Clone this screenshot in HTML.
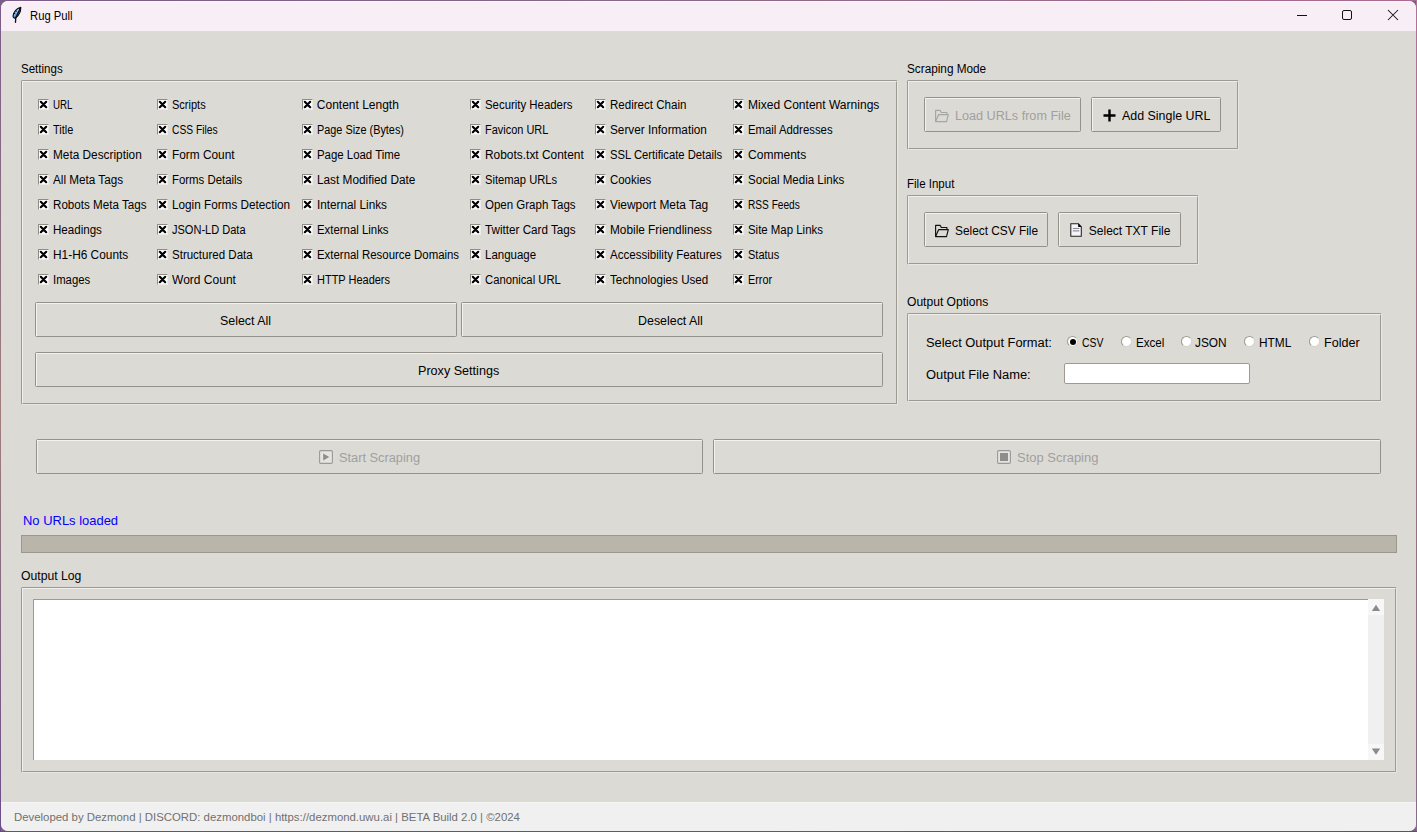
<!DOCTYPE html>
<html><head><meta charset="utf-8">
<style>
*{margin:0;padding:0;box-sizing:border-box}
html,body{width:1417px;height:832px;overflow:hidden}
body{font-family:"Liberation Sans",sans-serif;font-size:12px;color:#000;position:relative;background:#7a5f86}
.a{position:absolute}
.t{position:absolute;white-space:nowrap;line-height:16px;transform-origin:0 0}
#win{position:absolute;left:1px;top:1px;width:1415px;height:830px;background:#dcdad5;border-radius:7px;overflow:hidden}
.cb{position:absolute;width:11px;height:11px;background:#fff;border-top:1px solid #8f8c85;border-left:1px solid #8f8c85;border-right:1px solid #ecebe8;border-bottom:1px solid #ecebe8}
.cb svg{position:absolute;left:0px;top:0px}
.grv{position:absolute;border-top:1px solid #9e9a91;border-left:1px solid #9e9a91;border-right:1px solid #e9e7e3;border-bottom:1px solid #e9e7e3;border-radius:2px}
.grv>div{position:absolute;left:0;top:0;right:0;bottom:0;border-top:1px solid #f1efec;border-left:1px solid #f1efec;border-right:1px solid #9e9a91;border-bottom:1px solid #9e9a91;border-radius:1px}
.btn{position:absolute;border:1px solid #94918a;border-radius:1.5px;background:#dcdad5;box-shadow:inset 1px 1px 0 #f3f2ef}
.radio{position:absolute;width:11px;height:11px;border-radius:50%;background:#fff;border:1px solid;border-color:#9e9a91 #d6d3ce #d6d3ce #9e9a91}
</style></head><body>
<div class="a" style="left:0;top:0;width:1417px;height:1px;background:linear-gradient(90deg,#7a5a88,#8a6a86 50%,#a86a90)"></div>
<div class="a" style="left:0;top:0;width:1px;height:832px;background:linear-gradient(180deg,#7a5a8a,#a07e7c 50%,#6a4c8a)"></div>
<div class="a" style="left:1416px;top:0;width:1px;height:832px;background:linear-gradient(180deg,#b0709a,#a07080 50%,#8a6a8a)"></div>
<div class="a" style="left:0;top:831px;width:1417px;height:1px;background:linear-gradient(90deg,#6a4c8a,#6a5080 50%,#5a4a9a)"></div>
<div id="win"></div>
<div class="a" style="left:1px;top:1px;width:1415px;height:30px;background:#f7eef6;border-radius:7px 7px 0 0;border-top:1px solid #fdf7fd"></div>
<div class="a" style="left:1px;top:802px;width:1415px;height:29px;background:#f0f0f0;border-radius:0 0 7px 7px;border-top:1px solid #f5f5f3"></div>
<svg class="a" style="left:0;top:0" width="30" height="30" viewBox="0 0 30 30"><path d="M20.8 7.2C17.2 8.2 13.8 11.6 13.1 15.8c-.2 1.6.9 2.6 2.4 2.2C18.6 15.6 20.9 11.4 20.8 7.2z" fill="#4f8fe0" stroke="#0d0d0d" stroke-width="1.1" stroke-linejoin="round"/><path d="M14.6 15.6C15.6 12.6 17.4 10.2 19.2 9" fill="none" stroke="#b8dcff" stroke-width="1.1"/><path d="M20.2 8.2L16 17.4M15.8 17.2L15.5 22.3" stroke="#0d0d0d" stroke-width="1.3" stroke-linecap="round"/><path d="M14.2 13.4l1.4.6M15.6 10.8l1.3.6" stroke="#0d0d0d" stroke-width="1"/></svg>
<div class="t" style="left:30.3px;top:8px;transform:scaleX(0.9378)">Rug Pull</div>
<div class="a" style="left:1297px;top:15px;width:10px;height:1px;background:#111"></div>
<div class="a" style="left:1342px;top:10px;width:10px;height:10px;border:1px solid #111;border-radius:2px"></div>
<svg class="a" style="left:1387px;top:9px" width="12" height="12" viewBox="0 0 12 12"><path d="M1 1L11 11M11 1L1 11" stroke="#111" stroke-width="1.05"/></svg>

<div class="t" style="left:20.8px;top:61px;transform:scaleX(0.9605)">Settings</div>
<div class="grv" style="left:21px;top:80px;width:877px;height:325px"><div></div></div>
<div class="cb" style="left:38px;top:99px"><svg width="9" height="9" viewBox="0 0 9 9"><path d="M1.8 1.8L7.2 7.2M7.2 1.8L1.8 7.2" stroke="#000" stroke-width="2.2" stroke-linecap="round"/></svg></div><div class="t" style="left:52.8px;top:97px;transform:scaleX(0.8125)">URL</div>
<div class="cb" style="left:38px;top:124px"><svg width="9" height="9" viewBox="0 0 9 9"><path d="M1.8 1.8L7.2 7.2M7.2 1.8L1.8 7.2" stroke="#000" stroke-width="2.2" stroke-linecap="round"/></svg></div><div class="t" style="left:52.8px;top:122px;transform:scaleX(0.9130)">Title</div>
<div class="cb" style="left:38px;top:149px"><svg width="9" height="9" viewBox="0 0 9 9"><path d="M1.8 1.8L7.2 7.2M7.2 1.8L1.8 7.2" stroke="#000" stroke-width="2.2" stroke-linecap="round"/></svg></div><div class="t" style="left:52.8px;top:147px;transform:scaleX(0.9856)">Meta Description</div>
<div class="cb" style="left:38px;top:174px"><svg width="9" height="9" viewBox="0 0 9 9"><path d="M1.8 1.8L7.2 7.2M7.2 1.8L1.8 7.2" stroke="#000" stroke-width="2.2" stroke-linecap="round"/></svg></div><div class="t" style="left:52.8px;top:172px;transform:scaleX(0.9764)">All Meta Tags</div>
<div class="cb" style="left:38px;top:199px"><svg width="9" height="9" viewBox="0 0 9 9"><path d="M1.8 1.8L7.2 7.2M7.2 1.8L1.8 7.2" stroke="#000" stroke-width="2.2" stroke-linecap="round"/></svg></div><div class="t" style="left:52.8px;top:197px;transform:scaleX(0.9688)">Robots Meta Tags</div>
<div class="cb" style="left:38px;top:224px"><svg width="9" height="9" viewBox="0 0 9 9"><path d="M1.8 1.8L7.2 7.2M7.2 1.8L1.8 7.2" stroke="#000" stroke-width="2.2" stroke-linecap="round"/></svg></div><div class="t" style="left:52.8px;top:222px;transform:scaleX(0.9647)">Headings</div>
<div class="cb" style="left:38px;top:249px"><svg width="9" height="9" viewBox="0 0 9 9"><path d="M1.8 1.8L7.2 7.2M7.2 1.8L1.8 7.2" stroke="#000" stroke-width="2.2" stroke-linecap="round"/></svg></div><div class="t" style="left:52.8px;top:247px;transform:scaleX(0.9895)">H1-H6 Counts</div>
<div class="cb" style="left:38px;top:274px"><svg width="9" height="9" viewBox="0 0 9 9"><path d="M1.8 1.8L7.2 7.2M7.2 1.8L1.8 7.2" stroke="#000" stroke-width="2.2" stroke-linecap="round"/></svg></div><div class="t" style="left:52.8px;top:272px;transform:scaleX(0.9436)">Images</div>
<div class="cb" style="left:157px;top:99px"><svg width="9" height="9" viewBox="0 0 9 9"><path d="M1.8 1.8L7.2 7.2M7.2 1.8L1.8 7.2" stroke="#000" stroke-width="2.2" stroke-linecap="round"/></svg></div><div class="t" style="left:171.8px;top:97px;transform:scaleX(0.9189)">Scripts</div>
<div class="cb" style="left:157px;top:124px"><svg width="9" height="9" viewBox="0 0 9 9"><path d="M1.8 1.8L7.2 7.2M7.2 1.8L1.8 7.2" stroke="#000" stroke-width="2.2" stroke-linecap="round"/></svg></div><div class="t" style="left:171.8px;top:122px;transform:scaleX(0.8566)">CSS Files</div>
<div class="cb" style="left:157px;top:149px"><svg width="9" height="9" viewBox="0 0 9 9"><path d="M1.8 1.8L7.2 7.2M7.2 1.8L1.8 7.2" stroke="#000" stroke-width="2.2" stroke-linecap="round"/></svg></div><div class="t" style="left:171.8px;top:147px;transform:scaleX(0.9875)">Form Count</div>
<div class="cb" style="left:157px;top:174px"><svg width="9" height="9" viewBox="0 0 9 9"><path d="M1.8 1.8L7.2 7.2M7.2 1.8L1.8 7.2" stroke="#000" stroke-width="2.2" stroke-linecap="round"/></svg></div><div class="t" style="left:171.8px;top:172px;transform:scaleX(0.9500)">Forms Details</div>
<div class="cb" style="left:157px;top:199px"><svg width="9" height="9" viewBox="0 0 9 9"><path d="M1.8 1.8L7.2 7.2M7.2 1.8L1.8 7.2" stroke="#000" stroke-width="2.2" stroke-linecap="round"/></svg></div><div class="t" style="left:171.8px;top:197px;transform:scaleX(0.9785)">Login Forms Detection</div>
<div class="cb" style="left:157px;top:224px"><svg width="9" height="9" viewBox="0 0 9 9"><path d="M1.8 1.8L7.2 7.2M7.2 1.8L1.8 7.2" stroke="#000" stroke-width="2.2" stroke-linecap="round"/></svg></div><div class="t" style="left:171.8px;top:222px;transform:scaleX(0.9187)">JSON-LD Data</div>
<div class="cb" style="left:157px;top:249px"><svg width="9" height="9" viewBox="0 0 9 9"><path d="M1.8 1.8L7.2 7.2M7.2 1.8L1.8 7.2" stroke="#000" stroke-width="2.2" stroke-linecap="round"/></svg></div><div class="t" style="left:171.8px;top:247px;transform:scaleX(0.9595)">Structured Data</div>
<div class="cb" style="left:157px;top:274px"><svg width="9" height="9" viewBox="0 0 9 9"><path d="M1.8 1.8L7.2 7.2M7.2 1.8L1.8 7.2" stroke="#000" stroke-width="2.2" stroke-linecap="round"/></svg></div><div class="t" style="left:171.8px;top:272px;transform:scaleX(1.0016)">Word Count</div>
<div class="cb" style="left:302px;top:99px"><svg width="9" height="9" viewBox="0 0 9 9"><path d="M1.8 1.8L7.2 7.2M7.2 1.8L1.8 7.2" stroke="#000" stroke-width="2.2" stroke-linecap="round"/></svg></div><div class="t" style="left:316.8px;top:97px;transform:scaleX(1.0000)">Content Length</div>
<div class="cb" style="left:302px;top:124px"><svg width="9" height="9" viewBox="0 0 9 9"><path d="M1.8 1.8L7.2 7.2M7.2 1.8L1.8 7.2" stroke="#000" stroke-width="2.2" stroke-linecap="round"/></svg></div><div class="t" style="left:316.8px;top:122px;transform:scaleX(0.9052)">Page Size (Bytes)</div>
<div class="cb" style="left:302px;top:149px"><svg width="9" height="9" viewBox="0 0 9 9"><path d="M1.8 1.8L7.2 7.2M7.2 1.8L1.8 7.2" stroke="#000" stroke-width="2.2" stroke-linecap="round"/></svg></div><div class="t" style="left:316.8px;top:147px;transform:scaleX(0.9511)">Page Load Time</div>
<div class="cb" style="left:302px;top:174px"><svg width="9" height="9" viewBox="0 0 9 9"><path d="M1.8 1.8L7.2 7.2M7.2 1.8L1.8 7.2" stroke="#000" stroke-width="2.2" stroke-linecap="round"/></svg></div><div class="t" style="left:316.8px;top:172px;transform:scaleX(0.9830)">Last Modified Date</div>
<div class="cb" style="left:302px;top:199px"><svg width="9" height="9" viewBox="0 0 9 9"><path d="M1.8 1.8L7.2 7.2M7.2 1.8L1.8 7.2" stroke="#000" stroke-width="2.2" stroke-linecap="round"/></svg></div><div class="t" style="left:316.8px;top:197px;transform:scaleX(0.9803)">Internal Links</div>
<div class="cb" style="left:302px;top:224px"><svg width="9" height="9" viewBox="0 0 9 9"><path d="M1.8 1.8L7.2 7.2M7.2 1.8L1.8 7.2" stroke="#000" stroke-width="2.2" stroke-linecap="round"/></svg></div><div class="t" style="left:316.8px;top:222px;transform:scaleX(0.9493)">External Links</div>
<div class="cb" style="left:302px;top:249px"><svg width="9" height="9" viewBox="0 0 9 9"><path d="M1.8 1.8L7.2 7.2M7.2 1.8L1.8 7.2" stroke="#000" stroke-width="2.2" stroke-linecap="round"/></svg></div><div class="t" style="left:316.8px;top:247px;transform:scaleX(0.9510)">External Resource Domains</div>
<div class="cb" style="left:302px;top:274px"><svg width="9" height="9" viewBox="0 0 9 9"><path d="M1.8 1.8L7.2 7.2M7.2 1.8L1.8 7.2" stroke="#000" stroke-width="2.2" stroke-linecap="round"/></svg></div><div class="t" style="left:316.8px;top:272px;transform:scaleX(0.9150)">HTTP Headers</div>
<div class="cb" style="left:470px;top:99px"><svg width="9" height="9" viewBox="0 0 9 9"><path d="M1.8 1.8L7.2 7.2M7.2 1.8L1.8 7.2" stroke="#000" stroke-width="2.2" stroke-linecap="round"/></svg></div><div class="t" style="left:484.8px;top:97px;transform:scaleX(0.9500)">Security Headers</div>
<div class="cb" style="left:470px;top:124px"><svg width="9" height="9" viewBox="0 0 9 9"><path d="M1.8 1.8L7.2 7.2M7.2 1.8L1.8 7.2" stroke="#000" stroke-width="2.2" stroke-linecap="round"/></svg></div><div class="t" style="left:484.8px;top:122px;transform:scaleX(0.9129)">Favicon URL</div>
<div class="cb" style="left:470px;top:149px"><svg width="9" height="9" viewBox="0 0 9 9"><path d="M1.8 1.8L7.2 7.2M7.2 1.8L1.8 7.2" stroke="#000" stroke-width="2.2" stroke-linecap="round"/></svg></div><div class="t" style="left:484.8px;top:147px;transform:scaleX(0.9930)">Robots.txt Content</div>
<div class="cb" style="left:470px;top:174px"><svg width="9" height="9" viewBox="0 0 9 9"><path d="M1.8 1.8L7.2 7.2M7.2 1.8L1.8 7.2" stroke="#000" stroke-width="2.2" stroke-linecap="round"/></svg></div><div class="t" style="left:484.8px;top:172px;transform:scaleX(0.9325)">Sitemap URLs</div>
<div class="cb" style="left:470px;top:199px"><svg width="9" height="9" viewBox="0 0 9 9"><path d="M1.8 1.8L7.2 7.2M7.2 1.8L1.8 7.2" stroke="#000" stroke-width="2.2" stroke-linecap="round"/></svg></div><div class="t" style="left:484.8px;top:197px;transform:scaleX(0.9585)">Open Graph Tags</div>
<div class="cb" style="left:470px;top:224px"><svg width="9" height="9" viewBox="0 0 9 9"><path d="M1.8 1.8L7.2 7.2M7.2 1.8L1.8 7.2" stroke="#000" stroke-width="2.2" stroke-linecap="round"/></svg></div><div class="t" style="left:484.8px;top:222px;transform:scaleX(0.9731)">Twitter Card Tags</div>
<div class="cb" style="left:470px;top:249px"><svg width="9" height="9" viewBox="0 0 9 9"><path d="M1.8 1.8L7.2 7.2M7.2 1.8L1.8 7.2" stroke="#000" stroke-width="2.2" stroke-linecap="round"/></svg></div><div class="t" style="left:484.8px;top:247px;transform:scaleX(0.9574)">Language</div>
<div class="cb" style="left:470px;top:274px"><svg width="9" height="9" viewBox="0 0 9 9"><path d="M1.8 1.8L7.2 7.2M7.2 1.8L1.8 7.2" stroke="#000" stroke-width="2.2" stroke-linecap="round"/></svg></div><div class="t" style="left:484.8px;top:272px;transform:scaleX(0.9395)">Canonical URL</div>
<div class="cb" style="left:595px;top:99px"><svg width="9" height="9" viewBox="0 0 9 9"><path d="M1.8 1.8L7.2 7.2M7.2 1.8L1.8 7.2" stroke="#000" stroke-width="2.2" stroke-linecap="round"/></svg></div><div class="t" style="left:609.8px;top:97px;transform:scaleX(0.9633)">Redirect Chain</div>
<div class="cb" style="left:595px;top:124px"><svg width="9" height="9" viewBox="0 0 9 9"><path d="M1.8 1.8L7.2 7.2M7.2 1.8L1.8 7.2" stroke="#000" stroke-width="2.2" stroke-linecap="round"/></svg></div><div class="t" style="left:609.8px;top:122px;transform:scaleX(0.9818)">Server Information</div>
<div class="cb" style="left:595px;top:149px"><svg width="9" height="9" viewBox="0 0 9 9"><path d="M1.8 1.8L7.2 7.2M7.2 1.8L1.8 7.2" stroke="#000" stroke-width="2.2" stroke-linecap="round"/></svg></div><div class="t" style="left:609.8px;top:147px;transform:scaleX(0.9375)">SSL Certificate Details</div>
<div class="cb" style="left:595px;top:174px"><svg width="9" height="9" viewBox="0 0 9 9"><path d="M1.8 1.8L7.2 7.2M7.2 1.8L1.8 7.2" stroke="#000" stroke-width="2.2" stroke-linecap="round"/></svg></div><div class="t" style="left:609.8px;top:172px;transform:scaleX(0.9512)">Cookies</div>
<div class="cb" style="left:595px;top:199px"><svg width="9" height="9" viewBox="0 0 9 9"><path d="M1.8 1.8L7.2 7.2M7.2 1.8L1.8 7.2" stroke="#000" stroke-width="2.2" stroke-linecap="round"/></svg></div><div class="t" style="left:609.8px;top:197px;transform:scaleX(0.9919)">Viewport Meta Tag</div>
<div class="cb" style="left:595px;top:224px"><svg width="9" height="9" viewBox="0 0 9 9"><path d="M1.8 1.8L7.2 7.2M7.2 1.8L1.8 7.2" stroke="#000" stroke-width="2.2" stroke-linecap="round"/></svg></div><div class="t" style="left:609.8px;top:222px;transform:scaleX(0.9854)">Mobile Friendliness</div>
<div class="cb" style="left:595px;top:249px"><svg width="9" height="9" viewBox="0 0 9 9"><path d="M1.8 1.8L7.2 7.2M7.2 1.8L1.8 7.2" stroke="#000" stroke-width="2.2" stroke-linecap="round"/></svg></div><div class="t" style="left:609.8px;top:247px;transform:scaleX(0.9629)">Accessibility Features</div>
<div class="cb" style="left:595px;top:274px"><svg width="9" height="9" viewBox="0 0 9 9"><path d="M1.8 1.8L7.2 7.2M7.2 1.8L1.8 7.2" stroke="#000" stroke-width="2.2" stroke-linecap="round"/></svg></div><div class="t" style="left:609.8px;top:272px;transform:scaleX(0.9693)">Technologies Used</div>
<div class="cb" style="left:733px;top:99px"><svg width="9" height="9" viewBox="0 0 9 9"><path d="M1.8 1.8L7.2 7.2M7.2 1.8L1.8 7.2" stroke="#000" stroke-width="2.2" stroke-linecap="round"/></svg></div><div class="t" style="left:747.8px;top:97px;transform:scaleX(1.0031)">Mixed Content Warnings</div>
<div class="cb" style="left:733px;top:124px"><svg width="9" height="9" viewBox="0 0 9 9"><path d="M1.8 1.8L7.2 7.2M7.2 1.8L1.8 7.2" stroke="#000" stroke-width="2.2" stroke-linecap="round"/></svg></div><div class="t" style="left:747.8px;top:122px;transform:scaleX(0.9461)">Email Addresses</div>
<div class="cb" style="left:733px;top:149px"><svg width="9" height="9" viewBox="0 0 9 9"><path d="M1.8 1.8L7.2 7.2M7.2 1.8L1.8 7.2" stroke="#000" stroke-width="2.2" stroke-linecap="round"/></svg></div><div class="t" style="left:747.8px;top:147px;transform:scaleX(1.0034)">Comments</div>
<div class="cb" style="left:733px;top:174px"><svg width="9" height="9" viewBox="0 0 9 9"><path d="M1.8 1.8L7.2 7.2M7.2 1.8L1.8 7.2" stroke="#000" stroke-width="2.2" stroke-linecap="round"/></svg></div><div class="t" style="left:747.8px;top:172px;transform:scaleX(0.9630)">Social Media Links</div>
<div class="cb" style="left:733px;top:199px"><svg width="9" height="9" viewBox="0 0 9 9"><path d="M1.8 1.8L7.2 7.2M7.2 1.8L1.8 7.2" stroke="#000" stroke-width="2.2" stroke-linecap="round"/></svg></div><div class="t" style="left:747.8px;top:197px;transform:scaleX(0.8443)">RSS Feeds</div>
<div class="cb" style="left:733px;top:224px"><svg width="9" height="9" viewBox="0 0 9 9"><path d="M1.8 1.8L7.2 7.2M7.2 1.8L1.8 7.2" stroke="#000" stroke-width="2.2" stroke-linecap="round"/></svg></div><div class="t" style="left:747.8px;top:222px;transform:scaleX(0.9519)">Site Map Links</div>
<div class="cb" style="left:733px;top:249px"><svg width="9" height="9" viewBox="0 0 9 9"><path d="M1.8 1.8L7.2 7.2M7.2 1.8L1.8 7.2" stroke="#000" stroke-width="2.2" stroke-linecap="round"/></svg></div><div class="t" style="left:747.8px;top:247px;transform:scaleX(0.9176)">Status</div>
<div class="cb" style="left:733px;top:274px"><svg width="9" height="9" viewBox="0 0 9 9"><path d="M1.8 1.8L7.2 7.2M7.2 1.8L1.8 7.2" stroke="#000" stroke-width="2.2" stroke-linecap="round"/></svg></div><div class="t" style="left:747.8px;top:272px;transform:scaleX(0.9000)">Error</div>
<div class="btn " style="left:35px;top:302px;width:422px;height:35px"></div>
<div class="t" style="left:220.0px;top:313px;transform:scaleX(1.0347)">Select All</div>
<div class="btn " style="left:461px;top:302px;width:422px;height:35px"></div>
<div class="t" style="left:638.2px;top:313px;transform:scaleX(1.0349)">Deselect All</div>
<div class="btn " style="left:35px;top:352px;width:848px;height:35px"></div>
<div class="t" style="left:418.2px;top:363px;transform:scaleX(1.0494)">Proxy Settings</div>

<div class="t" style="left:906.6px;top:61px;transform:scaleX(0.9802)">Scraping Mode</div>
<div class="grv" style="left:907px;top:80px;width:332px;height:70px"><div></div></div>
<div class="btn " style="left:924px;top:97px;width:157px;height:35px"></div>
<svg class="a" style="left:930px;top:105px" width="24" height="20" viewBox="0 0 24 20"><path d="M5.6 16.6V5.3h4.5l1.2 2.2h5.6v2" fill="none" stroke="#a5a5a5" stroke-width="1.15" stroke-linejoin="round"/><path d="M8.7 9.6h9.6l-1.8 7H5.6z" fill="none" stroke="#a5a5a5" stroke-width="1.15" stroke-linejoin="round"/></svg>
<div class="t" style="left:954.9px;top:108px;color:#a0a0a0;transform:scaleX(1.0518)">Load URLs from File</div>
<div class="btn " style="left:1091px;top:97px;width:130px;height:35px"></div>
<svg class="a" style="left:1103px;top:109px" width="13" height="13" viewBox="0 0 13 13"><path d="M6.5 0.5v12M0.5 6.5h12" stroke="#000" stroke-width="2.4"/></svg>
<div class="t" style="left:1121.9px;top:108px;transform:scaleX(1.0349)">Add Single URL</div>

<div class="t" style="left:907.2px;top:176px;transform:scaleX(0.9600)">File Input</div>
<div class="grv" style="left:907px;top:195px;width:292px;height:70px"><div></div></div>
<div class="btn " style="left:924px;top:212px;width:124px;height:35px"></div>
<svg class="a" style="left:930px;top:220px" width="24" height="20" viewBox="0 0 24 20"><path d="M5.6 16.6V5.3h4.5l1.2 2.2h5.6v2" fill="none" stroke="#111" stroke-width="1.15" stroke-linejoin="round"/><path d="M8.7 9.6h9.6l-1.8 7H5.6z" fill="none" stroke="#111" stroke-width="1.15" stroke-linejoin="round"/></svg>
<div class="t" style="left:954.7px;top:223px;transform:scaleX(0.9881)">Select CSV File</div>
<div class="btn " style="left:1058px;top:212px;width:123px;height:35px"></div>
<svg class="a" style="left:1070px;top:223px" width="13" height="14" viewBox="0 0 13 14"><path d="M0.8 0.8h7.6l2.9 2.9V13.2H0.8z" fill="#f6f6f6" stroke="#222" stroke-width="1.05"/><path d="M8.2 0.6v3.3h3.3z" fill="#000"/><path d="M2.8 5.5h6.5" stroke="#8a8a8a" stroke-width="1.1"/><path d="M2.8 7.9h6.5" stroke="#7676a6" stroke-width="1"/></svg>
<div class="t" style="left:1088.8px;top:223px;transform:scaleX(1.0000)">Select TXT File</div>

<div class="t" style="left:907.2px;top:294px;transform:scaleX(1.0062)">Output Options</div>
<div class="grv" style="left:907px;top:313px;width:475px;height:89px"><div></div></div>
<div class="t" style="left:925.8px;top:335px;transform:scaleX(1.0726)">Select Output Format:</div>
<div class="radio" style="left:1067px;top:336px"><div class="a" style="left:1.5px;top:1.5px;width:6px;height:6px;border-radius:50%;background:#000"></div></div>
<div class="t" style="left:1082.1px;top:335px;transform:scaleX(0.8680)">CSV</div>
<div class="radio" style="left:1121px;top:336px"></div>
<div class="t" style="left:1136.1px;top:335px;transform:scaleX(0.9655)">Excel</div>
<div class="radio" style="left:1181px;top:336px"></div>
<div class="t" style="left:1195.4px;top:335px;transform:scaleX(0.9875)">JSON</div>
<div class="radio" style="left:1244px;top:336px"></div>
<div class="t" style="left:1259.2px;top:335px;transform:scaleX(0.9879)">HTML</div>
<div class="radio" style="left:1309px;top:336px"></div>
<div class="t" style="left:1324.4px;top:335px;transform:scaleX(1.0471)">Folder</div>
<div class="t" style="left:925.8px;top:367px;transform:scaleX(1.0753)">Output File Name:</div>
<div class="a" style="left:1064px;top:363px;width:186px;height:21px;background:#fff;border:1px solid #9e9a91;border-radius:2px"></div>

<div class="btn " style="left:36px;top:439px;width:667px;height:35px"></div>
<svg class="a" style="left:319px;top:450px" width="14" height="14" viewBox="0 0 14 14"><rect x="0.6" y="0.6" width="12.8" height="12.8" fill="#e6e4e0" stroke="#999" stroke-width="1.1" rx="1.2"/><path d="M4.2 3.4l6 3.6-6 3.6z" fill="#8d8d8d"/></svg>
<div class="t" style="left:338.9px;top:450px;color:#a0a0a0;transform:scaleX(1.0658)">Start Scraping</div>
<div class="btn " style="left:713px;top:439px;width:668px;height:35px"></div>
<svg class="a" style="left:997px;top:450px" width="14" height="14" viewBox="0 0 14 14"><rect x="0.6" y="0.6" width="12.8" height="12.8" fill="#e6e4e0" stroke="#999" stroke-width="1.1" rx="1.2"/><rect x="3" y="3" width="8" height="8" fill="#8d8d8d"/></svg>
<div class="t" style="left:1016.9px;top:450px;color:#a0a0a0;transform:scaleX(1.0800)">Stop Scraping</div>

<div class="t" style="left:23.3px;top:513px;font-size:13px;color:#0000ff;transform:scaleX(0.9968)">No URLs loaded</div>
<div class="a" style="left:21px;top:535px;width:1376px;height:18px;background:#bab5ab;border:1px solid #9b978e"></div>

<div class="t" style="left:21.2px;top:568px;transform:scaleX(1.0169)">Output Log</div>
<div class="grv" style="left:21px;top:587px;width:1376px;height:186px"><div></div></div>
<div class="a" style="left:33px;top:599px;width:1335px;height:161px;background:#fff;border-top:1px solid #9e9a91;border-left:1px solid #9e9a91"></div>
<div class="a" style="left:1368px;top:599px;width:16px;height:161px;background:#f0f0f0"></div>
<div class="a" style="left:1368px;top:599px;width:16px;height:16px;background:#f7f7f7"></div><svg class="a" style="left:1368px;top:599px" width="16" height="16" viewBox="0 0 16 16"><path d="M3.8 12L8 5.8L12.2 12z" fill="#8a8a8a"/></svg>
<div class="a" style="left:1368px;top:744px;width:16px;height:16px;background:#f7f7f7"></div><svg class="a" style="left:1368px;top:744px" width="16" height="16" viewBox="0 0 16 16"><path d="M3.8 4.6L8 10.8L12.2 4.6z" fill="#8a8a8a"/></svg>

<div class="t" style="left:14.2px;top:809px;font-size:11px;color:#707070;transform:scaleX(1.0348)">Developed by Dezmond | DISCORD: dezmondboi | https://dezmond.uwu.ai | BETA Build 2.0 | ©2024</div>
</body></html>
